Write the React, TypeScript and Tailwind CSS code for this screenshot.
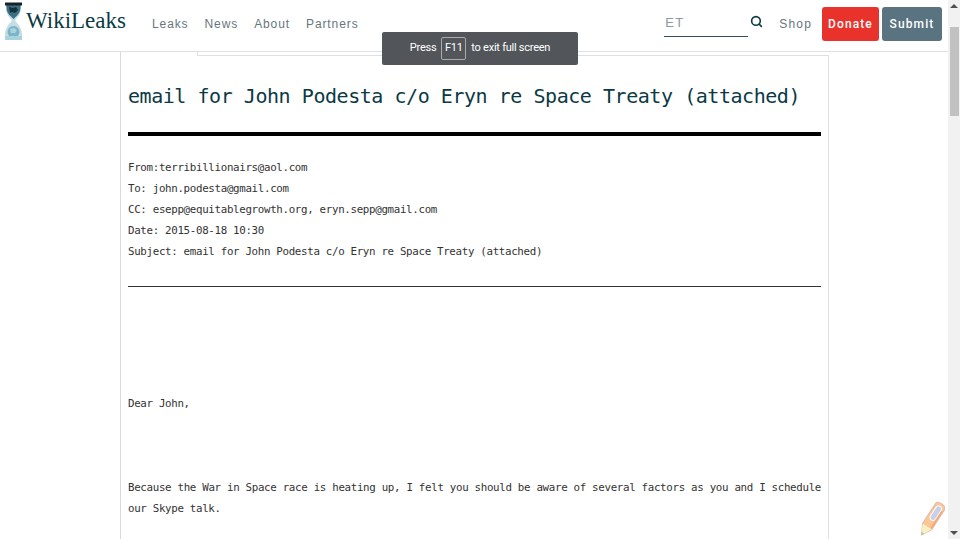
import { Search } from 'lucide-react'

const NAV = ['Leaks', 'News', 'About', 'Partners']

const HEADERS = [
  'From:terribillionairs@aol.com',
  'To: john.podesta@gmail.com',
  'CC: esepp@equitablegrowth.org, eryn.sepp@gmail.com',
  'Date: 2015-08-18 10:30',
  'Subject: email for John Podesta c/o Eryn re Space Treaty (attached)',
]

function Hourglass() {
  return (
    <svg width="19" height="38" viewBox="0 0 19 38" className="mb-[6px] shrink-0">
      <path d="M2 3h15c.5 7-1.500 11-5.500 14.500v2C15 22.500 18 27 18 33v4H1v-4c0-6 3-10.500 6.500-13.500v-2C3.500 14 1.500 10 2 3z" fill="#c5dde4" />
      <path d="M2.500 3h14c.3 5-1 9-4.500 11.500L9.500 17 7 14.500C3.500 12 2.200 8 2.500 3z" fill="#3b6f83" />
      <path d="M5 5l4 1 3-1 2 3-3 3-3-1-2 1z" fill="#14323d" />
      <rect x="1" y="0.500" width="17" height="3" fill="#16242a" />
      <circle cx="9.500" cy="30" r="6" fill="#7db5c8" />
      <path d="M6 27l4-1 3 2-2 3-4 0z" fill="#a9d3df" />
      <rect x="1" y="34" width="17" height="4" fill="#a8d2df" />
    </svg>
  )
}

function Pencil() {
  return (
    <svg width="26" height="38" viewBox="-13 -19 26 38">
      <g transform="rotate(33)">
        <path d="M-5.500 -15a5.500 3 0 0 1 11 0V9L0 19-5.500 9z" fill="#f9c893" stroke="#eab0a8" />
        <path d="M-5.500 9L0 19 5.500 9z" fill="#f6f1c2" />
        <path d="M-1.500 18.500L0 19 1.500 16.500h-3z" fill="#b7c99a" />
        <rect x="-3" y="-15" width="6" height="16" rx="3" fill="#c6cfeb" stroke="#ffffff" />
        <rect x="3.500" y="-12" width="1.500" height="20" fill="#f3a878" />
      </g>
    </svg>
  )
}

export default function App() {
  return (
    <div className="relative flex h-[539px] w-[960px] overflow-hidden bg-white">
      <div className="flex min-w-0 flex-1 flex-col">
        <header className="flex h-[52px] shrink-0 items-center border-b border-[#e0e0e0] pb-[4px] pl-[4px] font-['Liberation_Sans',sans-serif]">
          <Hourglass />
          <span className="mb-[6px] ml-[3px] font-['Liberation_Serif',serif] text-[23px] leading-none text-[#0b3a45]">WikiLeaks</span>
          <nav className="ml-[26px] flex gap-[16px] text-[12px] tracking-[0.9px] text-[#66767d]">
            {NAV.map((n) => (
              <span key={n}>{n}</span>
            ))}
          </nav>
          <div className="ml-auto flex items-center">
            <div className="flex h-[26px] w-[84px] items-center border-b border-[#33525c] pl-[1px] text-[13px] tracking-[1.200px] text-[#8a9aa0]">ET</div>
            <Search className="mb-[5px] ml-[2px] h-[13px] w-[13px] text-[#0b3a45]" strokeWidth={3} />
            <span className="ml-[16px] text-[12px] tracking-[1.150px] text-[#66767d]">Shop</span>
            <span className="ml-[10px] flex h-[34px] w-[57px] items-center justify-center rounded-[3px] bg-[#e8322b] font-['Roboto',sans-serif] text-[12px] font-medium tracking-[1.1px] text-white">Donate</span>
            <span className="mr-[6px] ml-[3px] flex h-[34px] w-[60px] items-center justify-center rounded-[3px] bg-[#5a7380] font-['Roboto',sans-serif] text-[12px] font-medium tracking-[1.1px] text-white">Submit</span>
          </div>
        </header>
        <div className="ml-[120px] flex w-[709px] flex-1 flex-col border-l border-[#d9d9d9] font-['DejaVu_Sans_Mono',monospace]">
          <div className="flex h-[4px] shrink-0">
            <div className="w-[76px]" />
            <div className="flex-1 border-b border-l border-[#e0e0e0]" />
          </div>
          <div className="flex-1 border-r border-[#e0e0e0] px-[7px]">
            <h1 className="mt-[27px] text-[20px] leading-[26px] tracking-[-0.455px] text-[#0b3a45]">email for John Podesta c/o Eryn re Space Treaty (attached)</h1>
            <div className="mt-[23px] h-[4px] bg-black" />
            <div className="mt-[21px] text-[10.800px] leading-[21px] tracking-[-0.32px] text-[#333333]">
              {HEADERS.map((h) => (
                <div key={h}>{h}</div>
              ))}
            </div>
            <div className="mt-[24px] h-px bg-[#333333]" />
            <p className="mt-[106px] text-[10.800px] leading-[21px] tracking-[-0.32px] text-[#333333]">Dear John,</p>
            <p className="mt-[63px] text-justify text-[10.800px] leading-[21px] tracking-[-0.32px] text-[#333333]">Because the War in Space race is heating up, I felt you should be aware of several factors as you and I schedule our Skype talk.</p>
          </div>
        </div>
      </div>
      <div className="flex w-[12px] shrink-0 flex-col bg-[#f1f1f1]">
        <div className="flex h-[27px] shrink-0 justify-center pt-[4px]">
          <div className="h-0 w-0 border-x-[4px] border-b-[4px] border-x-transparent border-b-[#505050]" />
        </div>
        <div className="mr-[1px] ml-[2px] h-[89px] shrink-0 bg-[#c1c1c1]" />
        <div className="mt-auto flex h-[12px] shrink-0 justify-center pt-[4px]">
          <div className="h-0 w-0 border-x-[4px] border-t-[4px] border-x-transparent border-t-[#505050]" />
        </div>
      </div>
      <div className="absolute top-[32px] left-[382px] flex h-[33px] w-[196px] items-center justify-center rounded-[2px] bg-[#52555a] font-['Roboto',sans-serif] text-[11px] tracking-[-0.25px] text-white">
        Press
        <span className="mx-[5px] flex h-[23px] w-[25px] items-center justify-center rounded-[2px] border border-[#a9abad]">F11</span>
        to exit full screen
      </div>
      <div className="absolute top-[500px] left-[919px]">
        <Pencil />
      </div>
    </div>
  )
}
